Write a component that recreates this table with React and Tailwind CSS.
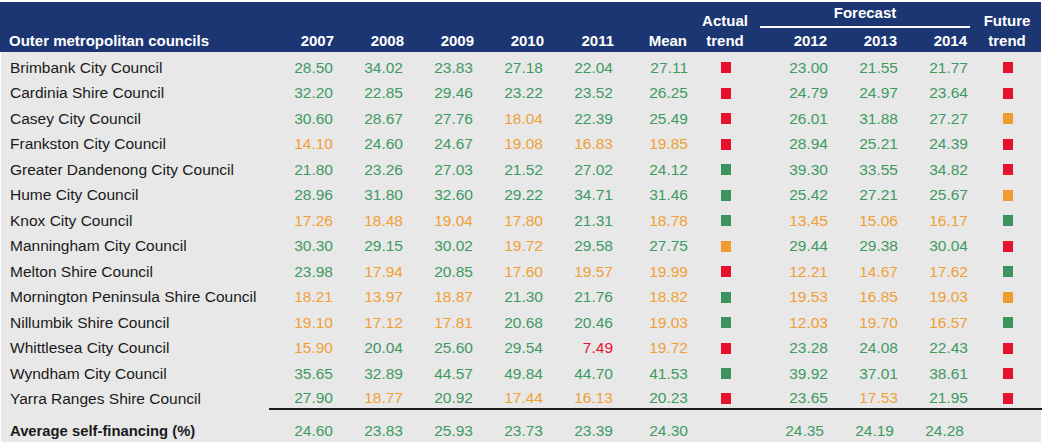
import React from "react";

const G = "text-[#3f9a62]";
const O = "text-[#f0a035]";
const R = "text-[#e8112d]";

function col(v) {
  const n = parseFloat(v);
  if (n >= 20) return G;
  if (n >= 10) return O;
  return R;
}

const SQ = {
  r: "bg-[#e5112d]",
  g: "bg-[#3c935e]",
  o: "bg-[#f09a30]",
};

const rows = [
  ["Brimbank City Council", ["28.50", "34.02", "23.83", "27.18", "22.04", "27.11"], "r", ["23.00", "21.55", "21.77"], "r"],
  ["Cardinia Shire Council", ["32.20", "22.85", "29.46", "23.22", "23.52", "26.25"], "r", ["24.79", "24.97", "23.64"], "r"],
  ["Casey City Council", ["30.60", "28.67", "27.76", "18.04", "22.39", "25.49"], "r", ["26.01", "31.88", "27.27"], "o"],
  ["Frankston City Council", ["14.10", "24.60", "24.67", "19.08", "16.83", "19.85"], "r", ["28.94", "25.21", "24.39"], "r"],
  ["Greater Dandenong City Council", ["21.80", "23.26", "27.03", "21.52", "27.02", "24.12"], "g", ["39.30", "33.55", "34.82"], "r"],
  ["Hume City Council", ["28.96", "31.80", "32.60", "29.22", "34.71", "31.46"], "g", ["25.42", "27.21", "25.67"], "o"],
  ["Knox City Council", ["17.26", "18.48", "19.04", "17.80", "21.31", "18.78"], "g", ["13.45", "15.06", "16.17"], "g"],
  ["Manningham City Council", ["30.30", "29.15", "30.02", "19.72", "29.58", "27.75"], "o", ["29.44", "29.38", "30.04"], "r"],
  ["Melton Shire Council", ["23.98", "17.94", "20.85", "17.60", "19.57", "19.99"], "r", ["12.21", "14.67", "17.62"], "g"],
  ["Mornington Peninsula Shire Council", ["18.21", "13.97", "18.87", "21.30", "21.76", "18.82"], "g", ["19.53", "16.85", "19.03"], "o"],
  ["Nillumbik Shire Council", ["19.10", "17.12", "17.81", "20.68", "20.46", "19.03"], "g", ["12.03", "19.70", "16.57"], "g"],
  ["Whittlesea City Council", ["15.90", "20.04", "25.60", "29.54", "7.49", "19.72"], "r", ["23.28", "24.08", "22.43"], "r"],
  ["Wyndham City Council", ["35.65", "32.89", "44.57", "49.84", "44.70", "41.53"], "g", ["39.92", "37.01", "38.61"], "r"],
  ["Yarra Ranges Shire Council", ["27.90", "18.77", "20.92", "17.44", "16.13", "20.23"], "r", ["23.65", "17.53", "21.95"], "r"],
];

const GRID =
  "grid grid-cols-[268px_70px_70px_70px_70px_70px_75px_64px_76px_70px_70px_68px]";

function Row({ r, last }) {
  const [name, actual, at, fc, ft] = r;
  const b = last ? "border-b-2 border-[#1a1a1a]" : "";
  const h = last ? "h-[23.5px] pt-[2px]" : "h-[25.5px]";
  return (
    <div className={`${GRID} ${h}`}>
      <div className="flex items-center pl-[9px] text-[#1a1a1a]">{name}</div>
      {actual.map((v, i) => (
        <div key={i} className={`flex items-center justify-end pr-[6px] ${col(v)} ${b}`}>
          {v}
        </div>
      ))}
      <div className={`flex items-center justify-center ${b}`}>
        <span className={`block w-[10px] h-[11px] ${SQ[at]}`} />
      </div>
      {fc.map((v, i) => (
        <div key={i} className={`flex items-center justify-end pr-[6px] ${col(v)} ${b}`}>
          {v}
        </div>
      ))}
      <div className={`flex items-center justify-center ${b}`}>
        <span className={`block w-[10px] h-[11px] ${SQ[ft]}`} />
      </div>
    </div>
  );
}

export default function App() {
  const avg = ["24.60", "23.83", "25.93", "23.73", "23.39", "24.30"];
  const avgF = ["24.35", "24.19", "24.28"];
  return (
    <div
      className="w-[1041px] pt-[2px] text-[15.5px] leading-[18px]"
      style={{ fontFamily: '"Liberation Sans", Arial, sans-serif' }}
    >
      {/* header */}
      <div className={`${GRID} grid-rows-[28px_22px] bg-[#1b3673] text-white font-bold text-[15px]`}>
        <div className="col-start-1 row-start-2 flex items-center pl-[9px]">
          Outer metropolitan councils
        </div>
        <div className="col-start-2 row-start-2 flex items-center justify-end pr-[4px]">2007</div>
        <div className="col-start-3 row-start-2 flex items-center justify-end pr-[4px]">2008</div>
        <div className="col-start-4 row-start-2 flex items-center justify-end pr-[4px]">2009</div>
        <div className="col-start-5 row-start-2 flex items-center justify-end pr-[4px]">2010</div>
        <div className="col-start-6 row-start-2 flex items-center justify-end pr-[4px]">2011</div>
        <div className="col-start-7 row-start-2 flex items-center justify-end pr-[6px]">Mean</div>
        <div className="col-start-8 row-start-1 flex items-end justify-center">Actual</div>
        <div className="col-start-8 row-start-2 flex items-center justify-center">trend</div>
        <div className="col-start-9 col-span-3 row-start-1 flex items-start">
          <div className="mx-[3px] flex-1 h-[26px] border-b-2 border-white flex items-center justify-center pb-[2px]">
            Forecast
          </div>
        </div>
        <div className="col-start-9 row-start-2 flex items-center justify-end pr-[6px]">2012</div>
        <div className="col-start-10 row-start-2 flex items-center justify-end pr-[6px]">2013</div>
        <div className="col-start-11 row-start-2 flex items-center justify-end pr-[6px]">2014</div>
        <div className="col-start-12 row-start-1 flex items-end justify-center">Future</div>
        <div className="col-start-12 row-start-2 flex items-center justify-center">trend</div>
      </div>

      {/* body */}
      <div className="bg-[#e8e8e8] pt-[3px] ml-[1px]">
        {rows.map((r, i) => (
          <Row key={r[0]} r={r} last={i === rows.length - 1} />
        ))}
        <div className={`${GRID} h-[32px] pt-[10px]`}>
          <div className="flex items-center pl-[9px] font-bold text-[14.8px] text-[#1a1a1a]">
            Average self-financing (%)
          </div>
          {avg.map((v, i) => (
            <div key={i} className={`flex items-center justify-end pr-[6px] ${G}`}>
              {v}
            </div>
          ))}
          <div />
          {avgF.map((v, i) => (
            <div key={i} className={`flex items-center justify-end pr-[10px] ${G}`}>
              {v}
            </div>
          ))}
          <div />
        </div>
      </div>
    </div>
  );
}
